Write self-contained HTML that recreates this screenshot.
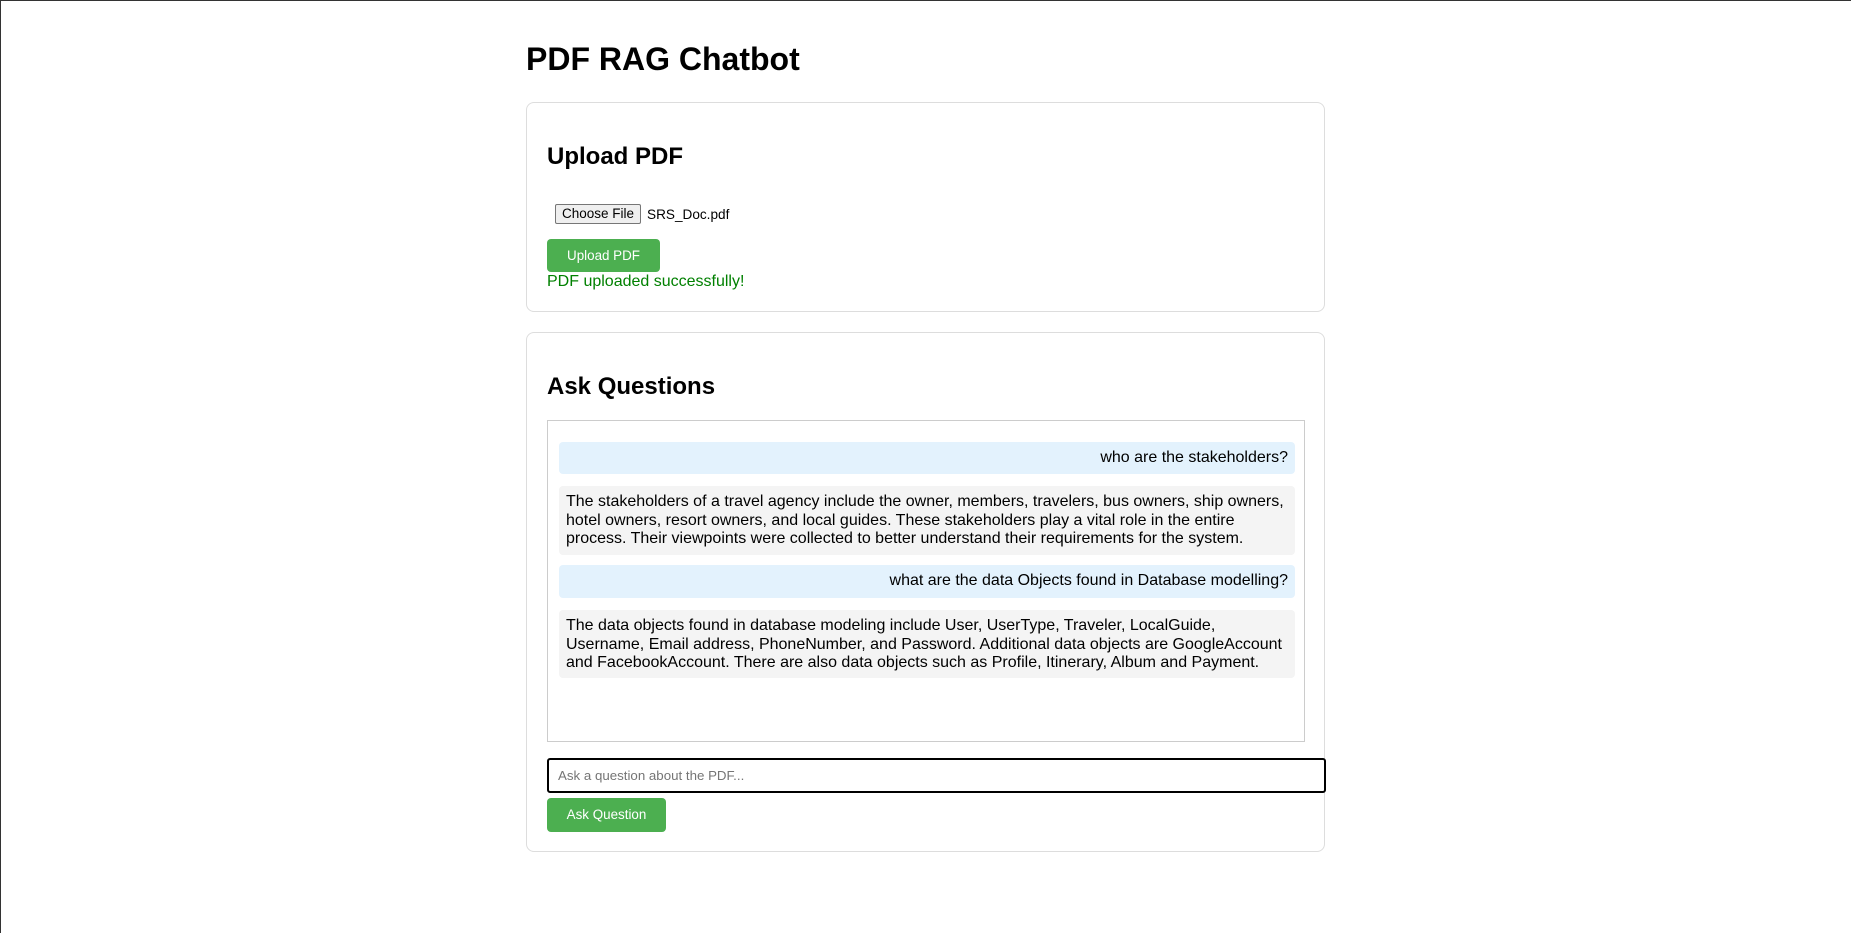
<!DOCTYPE html>
<html><head><meta charset="utf-8"><style>
html,body{margin:0;padding:0;background:#fff;}
body{width:1851px;height:933px;position:relative;overflow:hidden;font-family:"Liberation Sans",Arial,sans-serif;color:#000;border-top:1px solid #333;border-left:1px solid #333;box-sizing:border-box;}
.a{position:absolute;}
h1{position:absolute;left:525px;top:35px;margin:0;font-size:32px;font-weight:bold;line-height:46px;}
.card{position:absolute;left:525px;width:799px;border:1px solid #ddd;border-radius:8px;box-sizing:border-box;}
h2{position:absolute;left:20px;margin:0;font-size:24px;font-weight:bold;line-height:32px;}
.fbtn{position:absolute;left:28px;top:101px;width:86px;height:20px;background:#efefef;border:1px solid #767676;border-radius:2px;font-size:13.5px;line-height:18px;text-align:center;box-sizing:border-box;}
.gbtn{position:absolute;left:20px;background:#4caf50;color:#fff;border-radius:4px;font-size:13.4px;text-align:center;}
.chat{position:absolute;left:20px;top:87px;width:758px;height:322px;border:1px solid #ccc;box-sizing:border-box;}
.m{position:absolute;left:11px;width:736px;box-sizing:border-box;padding:7px 7px 5px;font-size:16px;line-height:18.6px;border-radius:4px;}
.u{background:#e3f2fd;text-align:right;}
.b{background:#f4f4f4;}
</style></head><body>
<h1>PDF RAG Chatbot</h1>
<div class="card" style="top:101px;height:210px;">
  <h2 style="top:38px;">Upload PDF</h2>
  <div class="fbtn">Choose File</div>
  <div class="a" style="left:120px;top:103px;font-size:13.6px;line-height:18px;">SRS_Doc.pdf</div>
  <div class="gbtn" style="top:136px;width:113px;height:33px;line-height:33px;">Upload PDF</div>
  <div class="a" style="left:20px;top:169px;font-size:16px;line-height:20px;color:#008000;">PDF uploaded successfully!</div>
</div>
<div class="card" style="top:331px;height:520px;">
  <h2 style="top:38px;">Ask Questions</h2>
  <div class="chat">
    <div class="m u" style="top:21px;height:32px;">who are the stakeholders?</div>
    <div class="m b" style="top:65px;height:69px;">The stakeholders of a travel agency include the owner, members, travelers, bus owners, ship owners, hotel owners, resort owners, and local guides. These stakeholders play a vital role in the entire process. Their viewpoints were collected to better understand their requirements for the system.</div>
    <div class="m u" style="top:144px;height:33px;">what are the data Objects found in Database modelling?</div>
    <div class="m b" style="top:189px;height:68px;">The data objects found in database modeling include User, UserType, Traveler, LocalGuide, Username, Email address, PhoneNumber, and Password. Additional data objects are GoogleAccount and FacebookAccount. There are also data objects such as Profile, Itinerary, Album and Payment.</div>
  </div>
  <div class="a" style="left:20px;top:425px;width:779px;height:35px;border:2px solid #000;border-radius:3px;box-sizing:border-box;font-size:13.3px;line-height:31px;padding-left:9px;color:#757575;">Ask a question about the PDF...</div>
  <div class="gbtn" style="top:465px;width:119px;height:34px;line-height:34px;">Ask Question</div>
</div>
</body></html>
